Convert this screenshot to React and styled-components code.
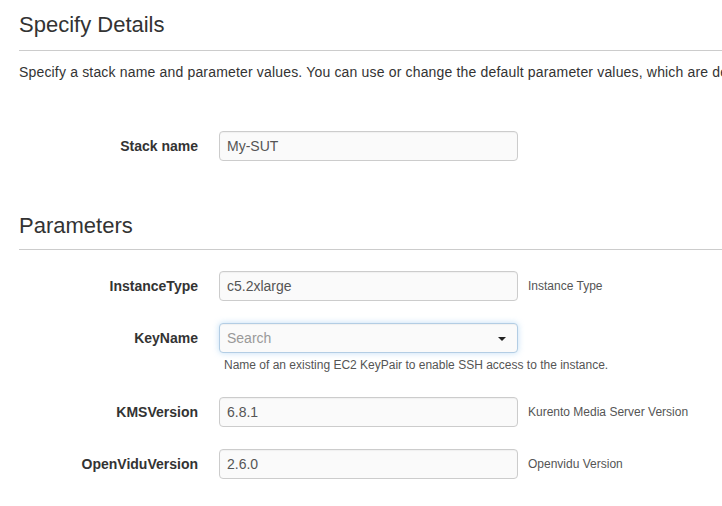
import React from 'react';
import styled, { createGlobalStyle } from 'styled-components';

const Global = createGlobalStyle`
  html, body { margin: 0; padding: 0; background: #fff; }
  body {
    font-family: "Liberation Sans", Arial, sans-serif;
    color: #333;
    overflow: hidden;
  }
`;

const Page = styled.div`
  padding-left: 19px;
  width: 722px;
  box-sizing: border-box;
  overflow: hidden;
`;

const Heading = styled.h2`
  margin: ${p => p.top}px 0 0;
  padding-bottom: ${p => p.pad}px;
  border-bottom: 1px solid #ccc;
  font-size: 22px;
  font-weight: normal;
  line-height: 24px;
  color: #333;
`;

const Intro = styled.p`
  margin: 11px 0 0;
  font-size: 14px;
  line-height: 20px;
  letter-spacing: 0.17px;
  color: #333;
  white-space: nowrap;
`;

const Form = styled.div`
  display: flex;
  flex-direction: column;
  gap: 22px;
  margin-top: ${p => p.top}px;
`;

const Row = styled.div`
  display: grid;
  grid-template-columns: 200px 299px auto;
  align-items: start;
`;

const Label = styled.label`
  padding-right: 21px;
  text-align: right;
  font-size: 14px;
  font-weight: bold;
  line-height: 30px;
  color: #333;
`;

const Field = styled.div`
  display: flex;
  flex-direction: column;
`;

const Input = styled.div`
  position: relative;
  box-sizing: border-box;
  height: 30px;
  padding: 0 7px;
  border: 1px solid ${p => (p.focus ? '#b3cde4' : '#ccc')};
  border-radius: 4px;
  background: #fafafa;
  box-shadow: ${p =>
    p.focus
      ? 'inset 0 1px 1px rgba(0,0,0,.04), 0 0 6px rgba(102,175,233,.4)'
      : 'inset 0 1px 1px rgba(0,0,0,.04)'};
  font-size: 14px;
  line-height: 28px;
  color: ${p => (p.placeholder ? '#999' : '#555')};
`;

const Caret = styled.span`
  position: absolute;
  right: 11px;
  top: 13px;
  width: 0;
  height: 0;
  border-left: 4px solid transparent;
  border-right: 4px solid transparent;
  border-top: 4px solid #222;
`;

const Help = styled.span`
  padding-left: 10px;
  font-size: 12px;
  line-height: 30px;
  color: #555;
  white-space: nowrap;
`;

const HelpBelow = styled.span`
  padding: 2px 0 0 5px;
  font-size: 12px;
  line-height: 20px;
  color: #555;
  white-space: nowrap;
`;

const params = [
  { name: 'InstanceType', value: 'c5.2xlarge', help: 'Instance Type' },
  {
    name: 'KeyName',
    value: 'Search',
    select: true,
    below: 'Name of an existing EC2 KeyPair to enable SSH access to the instance.',
  },
  { name: 'KMSVersion', value: '6.8.1', help: 'Kurento Media Server Version' },
  { name: 'OpenViduVersion', value: '2.6.0', help: 'Openvidu Version' },
];

export default function App() {
  return (
    <Page>
      <Global />
      <Heading top={13} pad={13}>Specify Details</Heading>
      <Intro>
        Specify a stack name and parameter values. You can use or change the default parameter
        values, which are defined in the AWS CloudFormation template. Learn more.
      </Intro>

      <Form top={49}>
        <Row>
          <Label>Stack name</Label>
          <Input>My-SUT</Input>
        </Row>
      </Form>

      <Heading top={53} pad={11}>Parameters</Heading>

      <Form top={21}>
        {params.map(p => (
          <Row key={p.name}>
            <Label>{p.name}</Label>
            <Field>
              <Input focus={p.select} placeholder={p.select}>
                {p.value}
                {p.select && <Caret />}
              </Input>
              {p.below && <HelpBelow>{p.below}</HelpBelow>}
            </Field>
            {p.help && <Help>{p.help}</Help>}
          </Row>
        ))}
      </Form>
    </Page>
  );
}
